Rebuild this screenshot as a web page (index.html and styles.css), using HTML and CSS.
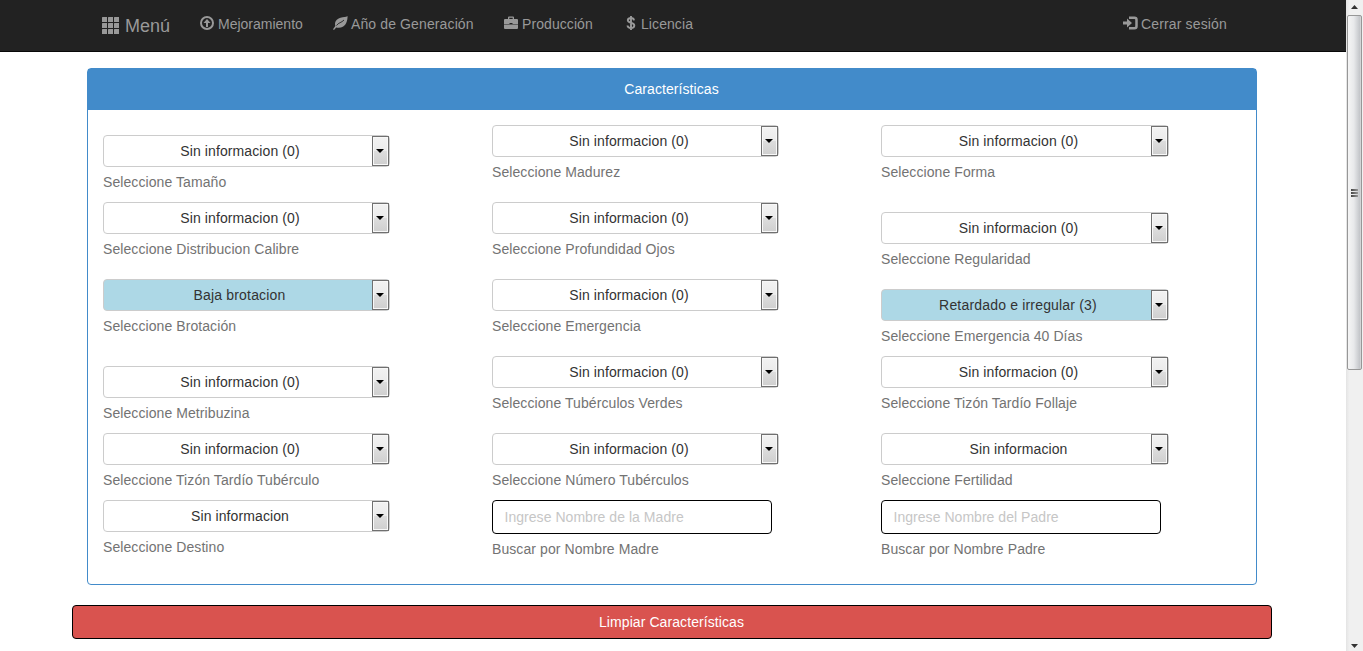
FILE: index.html
```html
<!DOCTYPE html>
<html lang="es">
<head>
<meta charset="utf-8">
<title>Características</title>
<link rel="stylesheet" href="styles.css">
</head>
<body>
<div class="window">
  <div class="page">
    <nav class="navbar">
      <a class="brand">
        <svg class="icon-grid" width="18" height="18" viewBox="0 0 18 18"><path d="M.5 0H5v5H0V.5zM6.500 0H11v5H6V.5zM12.500 0H17v5h-5V.5zM.5 6H5v5H0V6.500zM6.500 6H11v5H6V6.500zM12.500 6H17v5h-5V6.500zM.5 12H5v5H0v-4.500zM6.500 12H11v5H6v-4.500zM12.500 12H17v5h-5v-4.500z"/></svg>
        <span>Menú</span>
      </a>
      <a class="nav-link nav-mejora">
        <svg width="14" height="14" viewBox="0 0 14 14"><circle cx="7" cy="7" r="6" fill="none" stroke="currentColor" stroke-width="2"/><path d="M7 3l3.500 4H8v4H6V7H3.500z"/></svg>
        <span>Mejoramiento</span>
      </a>
      <a class="nav-link nav-anio">
        <svg width="15" height="14" viewBox="0 0 15 14"><path d="M14.500 0C13 1.200 10.500 1 7.500 1.800C3.600 2.800 1.200 6 2.300 10L0 13.200l1 .8l2.200-2.500C7.500 12.600 11.800 10.500 13.200 7C14.200 4.500 14.700 2.500 14.500 0z"/><path d="M3.500 9.500C5.500 6.500 8.500 6.800 11 4" fill="none" stroke="#222" stroke-width=".9"/></svg>
        <span>Año de Generación</span>
      </a>
      <a class="nav-link nav-prod">
        <svg width="14" height="14" viewBox="0 0 14 14"><path d="M4 3V1.500Q4 .5 5 .5h4q1 0 1 1V3h3q1 0 1 1v4H8.500V7h-3v1H0V4q0-1 1-1zM5.300 3h3.400V1.800H5.300zM0 8.500h14V12q0 1-1 1H1q-1 0-1-1z" fill-rule="evenodd"/></svg>
        <span>Producción</span>
      </a>
      <a class="nav-link nav-lic">
        <svg width="14" height="14" viewBox="0 0 14 14"><path d="M10 4.300C9.800 2.700 8.600 2 6.900 2C5 2 3.800 2.900 3.800 4.300C3.800 7.500 10.300 6 10.300 9.500C10.300 11.200 8.800 12 7 12C5 12 3.700 11.200 3.500 9.500M7 0v14" fill="none" stroke="currentColor" stroke-width="1.900"/></svg>
        <span>Licencia</span>
      </a>
      <a class="nav-link nav-exit">
        <svg width="15" height="14" viewBox="0 0 15 14"><path d="M0 5.500h4V2.500L9 7l-5 4.500V8.500H0z"/><path d="M6 1.800h5.500q2 0 2 2v6.400q0 2-2 2H6" fill="none" stroke="currentColor" stroke-width="2.500"/></svg>
        <span>Cerrar sesión</span>
      </a>
    </nav>

    <section class="panel">
      <header class="panel-heading">Características</header>
      <div class="fields">
        <div class="field field-low"><div class="select"><span>Sin informacion (0)</span><i class="arrow"></i></div><p>Seleccione Tamaño</p></div>
        <div class="field"><div class="select"><span>Sin informacion (0)</span><i class="arrow"></i></div><p>Seleccione Madurez</p></div>
        <div class="field"><div class="select"><span>Sin informacion (0)</span><i class="arrow"></i></div><p>Seleccione Forma</p></div>

        <div class="field"><div class="select"><span>Sin informacion (0)</span><i class="arrow"></i></div><p>Seleccione Distribucion Calibre</p></div>
        <div class="field"><div class="select"><span>Sin informacion (0)</span><i class="arrow"></i></div><p>Seleccione Profundidad Ojos</p></div>
        <div class="field field-low"><div class="select"><span>Sin informacion (0)</span><i class="arrow"></i></div><p>Seleccione Regularidad</p></div>

        <div class="field"><div class="select select-active"><span>Baja brotacion</span><i class="arrow"></i></div><p>Seleccione Brotación</p></div>
        <div class="field"><div class="select"><span>Sin informacion (0)</span><i class="arrow"></i></div><p>Seleccione Emergencia</p></div>
        <div class="field field-low"><div class="select select-active"><span>Retardado e irregular (3)</span><i class="arrow"></i></div><p>Seleccione Emergencia 40 Días</p></div>

        <div class="field field-low"><div class="select"><span>Sin informacion (0)</span><i class="arrow"></i></div><p>Seleccione Metribuzina</p></div>
        <div class="field"><div class="select"><span>Sin informacion (0)</span><i class="arrow"></i></div><p>Seleccione Tubérculos Verdes</p></div>
        <div class="field"><div class="select"><span>Sin informacion (0)</span><i class="arrow"></i></div><p>Seleccione Tizón Tardío Follaje</p></div>

        <div class="field"><div class="select"><span>Sin informacion (0)</span><i class="arrow"></i></div><p>Seleccione Tizón Tardío Tubérculo</p></div>
        <div class="field"><div class="select"><span>Sin informacion (0)</span><i class="arrow"></i></div><p>Seleccione Número Tubérculos</p></div>
        <div class="field"><div class="select"><span>Sin informacion</span><i class="arrow"></i></div><p>Seleccione Fertilidad</p></div>

        <div class="field"><div class="select"><span>Sin informacion</span><i class="arrow"></i></div><p>Seleccione Destino</p></div>
        <div class="field"><input class="text-input" type="text" placeholder="Ingrese Nombre de la Madre"><p>Buscar por Nombre Madre</p></div>
        <div class="field"><input class="text-input" type="text" placeholder="Ingrese Nombre del Padre"><p>Buscar por Nombre Padre</p></div>
      </div>
    </section>

    <button class="clear-button" type="button">Limpiar Características</button>
  </div>

  <div class="scrollbar">
    <svg class="scroll-up" width="17" height="15" viewBox="0 0 17 15"><path d="M5 9h7L8.500 5z"/></svg>
    <div class="thumb"><i></i><i></i><i></i></div>
    <svg class="scroll-down" width="17" height="16" viewBox="0 0 17 16"><path d="M5 9h7l-3.500 4z"/></svg>
  </div>
</div>
</body>
</html>
```
FILE: styles.css
```css
* { box-sizing: border-box; }
body {
  margin: 0;
  font: 14px/20px "Liberation Sans", Arial, sans-serif;
  letter-spacing: 0.08px;
  color: #333;
  background: #fff;
}
.window { display: flex; height: 651px; overflow: hidden; }
.page { width: 1346px; flex: none; }

.navbar {
  display: flex;
  align-items: flex-start;
  height: 52px;
  padding: 14px 119px 0 102px;
  background: #222;
  border-bottom: 1px solid #080808;
  color: #999;
}
.navbar svg { display: block; flex: none; fill: currentColor; }
.brand { display: flex; gap: 5px; width: 98px; padding-top: 2px; font-size: 18px; letter-spacing: 0; }
.brand svg { margin-top: 1px; }
.nav-link { display: flex; gap: 4px; white-space: nowrap; }
.nav-link svg { margin-top: 2px; }
.nav-mejora { width: 133px; letter-spacing: 0; }
.nav-anio { width: 171px; gap: 3px; letter-spacing: 0.12px; }
.nav-prod { width: 120px; }
.nav-lic { gap: 3px; }
.nav-exit { margin-left: auto; gap: 3px; letter-spacing: 0.15px; }

.panel {
  width: 1170px;
  height: 517px;
  margin: 16px 0 0 87px;
  border: 1px solid #428bca;
  border-radius: 4px;
}
.panel-heading {
  height: 41px;
  padding: 10px 1px 0 0;
  background: #428bca;
  color: #fff;
  text-align: center;
}
.fields {
  display: grid;
  grid-template-columns: repeat(3, 389px);
  grid-template-rows: repeat(4, 77px) 67px 57px;
  padding: 15px 0 0 15px;
  width: 1182px;
}
.field-low { padding-top: 10px; }
.field p { margin: 5px 0 0; color: #737373; }
.select {
  display: flex;
  width: 287px;
  height: 32px;
  border: 1px solid #ccc;
  border-radius: 4px;
  background: #fff;
  letter-spacing: 0.1px;
}
.field:nth-child(3n) .select { width: 288px; }
.select span { flex: 1; padding: 5px 0 0 4px; text-align: center; }
.select-active { background: #add8e6; letter-spacing: 0.18px; }
.select-active span { padding: 5px 0 0 3px; }
.arrow {
  display: flex;
  align-items: center;
  justify-content: center;
  width: 17px;
  height: 30px;
  border: 1px solid #707070;
  background: linear-gradient(#f2f2f2 0, #ebebeb 50%, #ddd 50%, #cfcfcf 100%);
  box-shadow: inset 0 0 0 1px #f8f8f8;
}
.arrow::before {
  content: "";
  margin-right: 1px;
  border: 4px solid transparent;
  border-top-color: #000;
  border-bottom: 0;
}
.text-input {
  display: block;
  width: 280px;
  height: 34px;
  padding: 6px 11.5px;
  border: 1px solid #000;
  border-radius: 4px;
  background: #fff;
  font: inherit;
  letter-spacing: 0.04px;
}
.text-input::placeholder { color: #c6c6c6; opacity: 1; }

.clear-button {
  display: block;
  width: 1200px;
  height: 34px;
  margin: 20px 0 0 72px;
  padding: 0 1px 0 0;
  border: 1px solid #000;
  border-radius: 4px;
  background: #d9534f;
  color: #fff;
  font: inherit;
  letter-spacing: 0.08px;
}

.scrollbar {
  display: flex;
  flex-direction: column;
  width: 17px;
  height: 651px;
  background: linear-gradient(90deg, #e4e4e4, #f0f0f0 20%, #f0f0f0);
}
.scrollbar svg { display: block; flex: none; fill: #333; }
.scroll-down { margin-top: auto; }
.thumb {
  display: flex;
  flex-direction: column;
  align-items: center;
  justify-content: center;
  gap: 1px;
  width: 15px;
  height: 355px;
  margin-left: 1px;
  border: 1px solid #979797;
  border-radius: 2px;
  background: linear-gradient(90deg, #f5f5f5, #e8e9eb 45%, #c4c6ca 90%, #ddd);
}
.thumb i { width: 7px; height: 2px; background: linear-gradient(90deg, #444, #999); }
```
